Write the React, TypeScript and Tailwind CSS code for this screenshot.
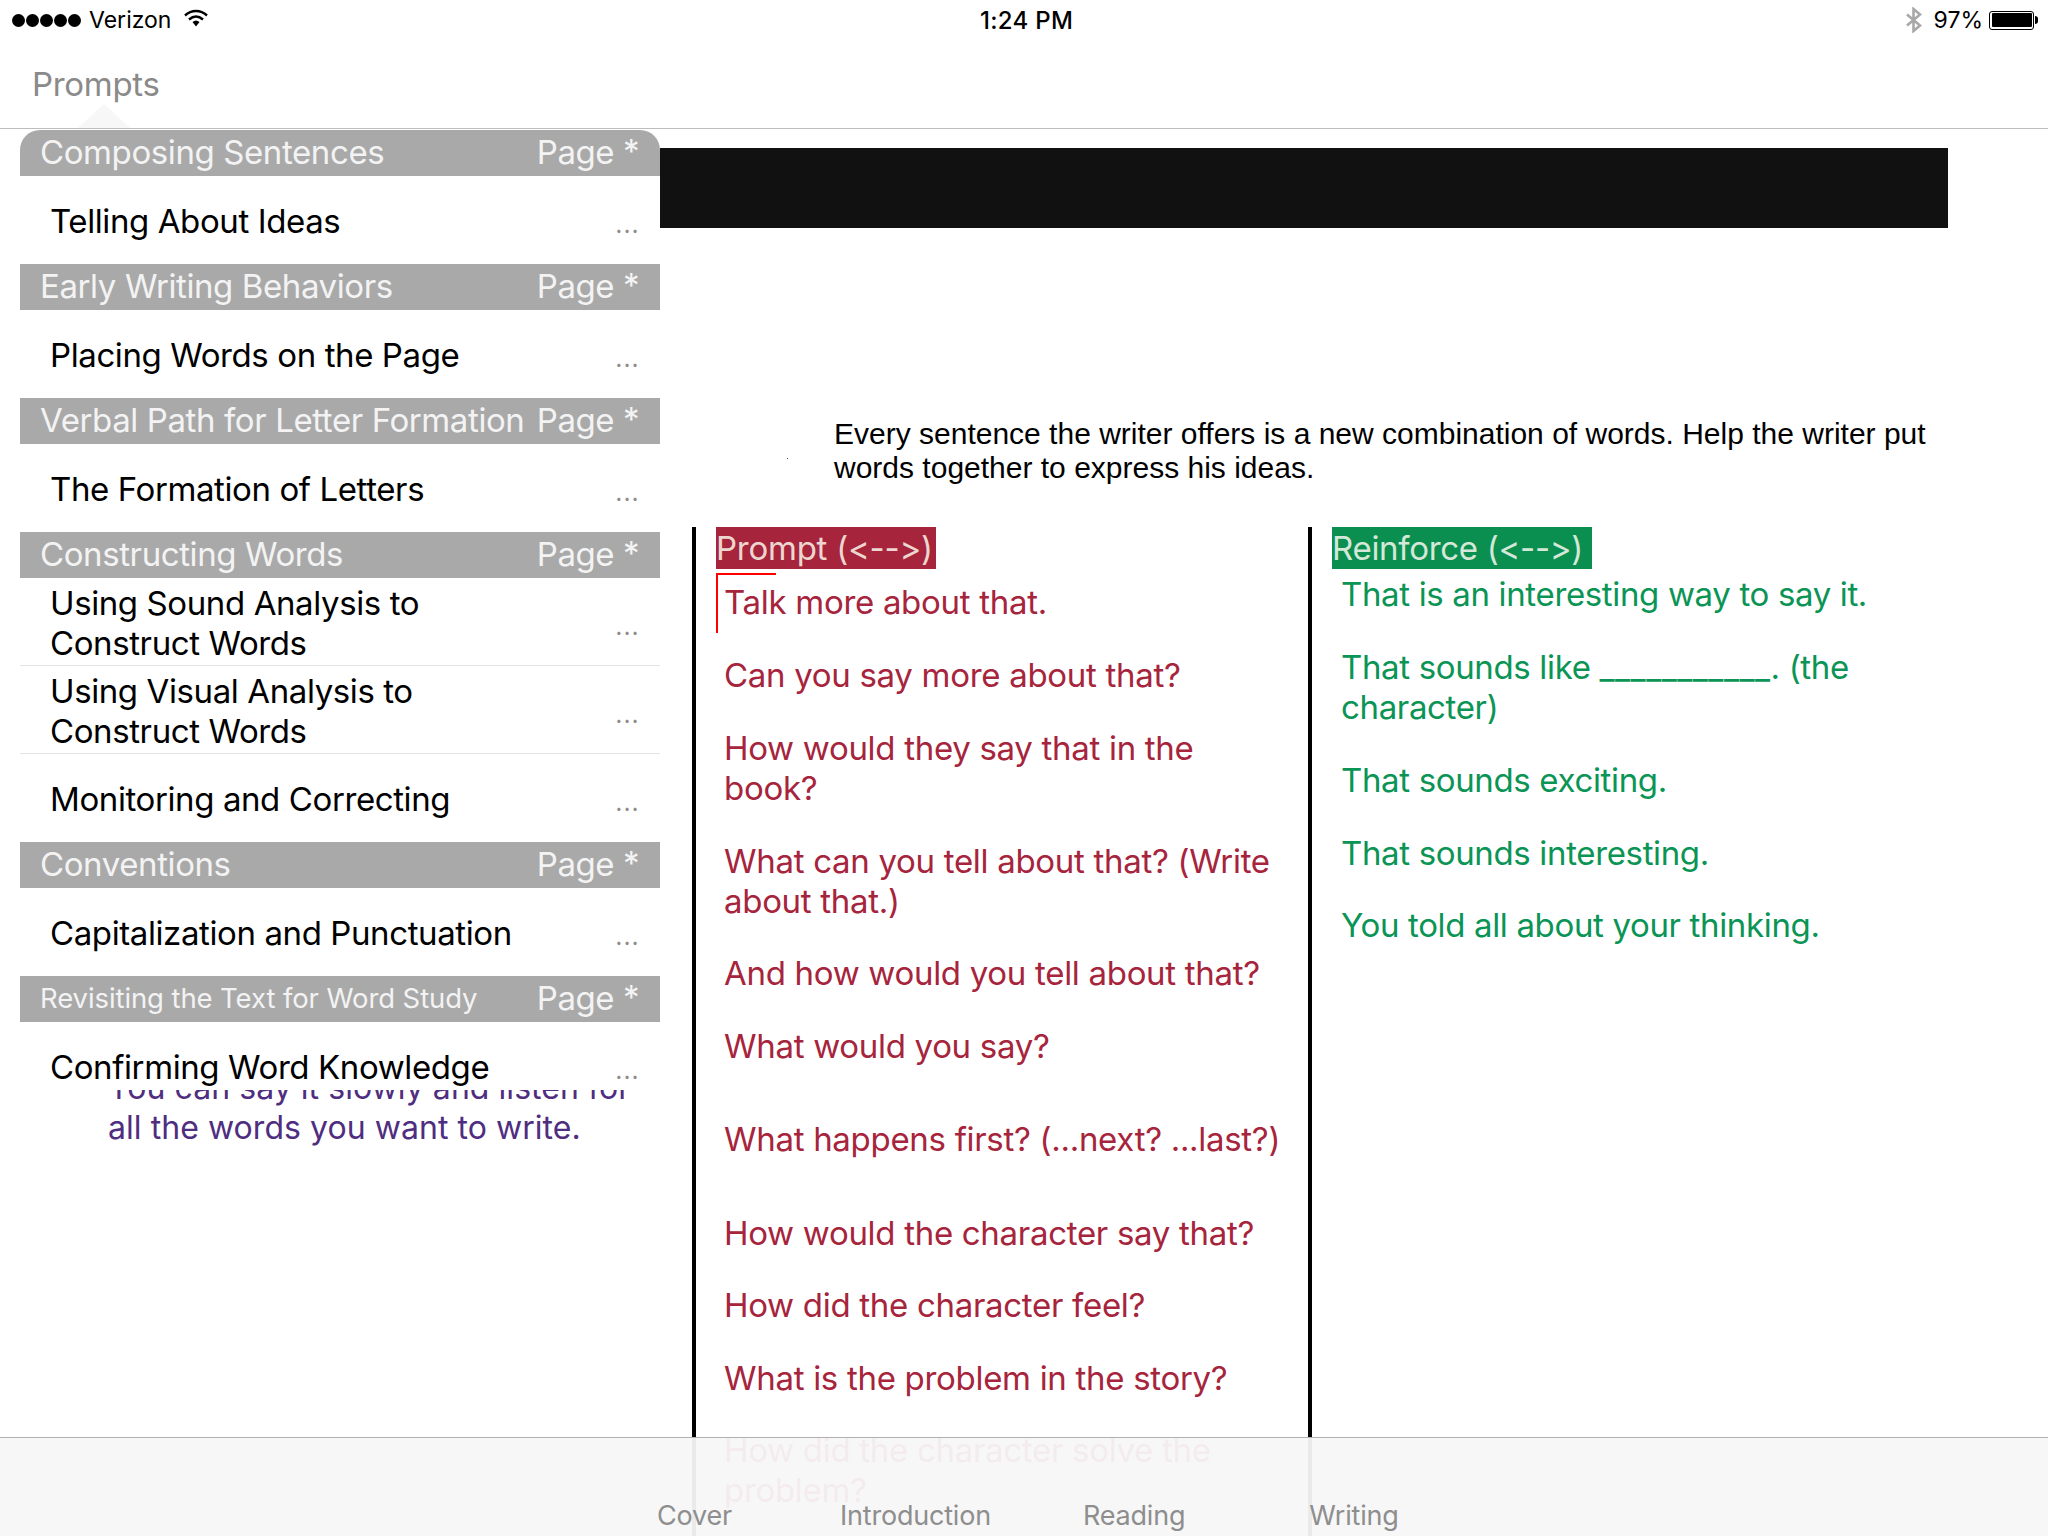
const sections = [
  {
    title: "Composing Sentences",
    rows: [{ lines: ["Telling About Ideas"] }],
  },
  {
    title: "Early Writing Behaviors",
    rows: [{ lines: ["Placing Words on the Page"] }],
  },
  {
    title: "Verbal Path for Letter Formation",
    rows: [{ lines: ["The Formation of Letters"] }],
  },
  {
    title: "Constructing Words",
    rows: [
      { lines: ["Using Sound Analysis to", "Construct Words"] },
      { lines: ["Using Visual Analysis to", "Construct Words"] },
      { lines: ["Monitoring and Correcting"] },
    ],
  },
  {
    title: "Conventions",
    rows: [{ lines: ["Capitalization and Punctuation"] }],
  },
  {
    title: "Revisiting the Text for Word Study",
    small: true,
    rows: [{ lines: ["Confirming Word Knowledge"] }],
  },
];

function SignalDots() {
  return (
    <div className="flex gap-[1px]">
      {[0, 1, 2, 3, 4].map((i) => (
        <span key={i} className="w-[13px] h-[13px] rounded-full bg-black" />
      ))}
    </div>
  );
}

function StatusBar() {
  return (
    <div className="h-[40px] flex items-center justify-between text-[23px] text-black relative">
      <div className="flex items-center pl-[12px]">
        <SignalDots />
        <span className="ml-[8px]">Verizon</span>
        <svg width="24" height="18" viewBox="0 0 24 18" className="ml-[13px] mb-[4px]">
          <path d="M1 6.5C7.5 .5 16.5 .5 23 6.5" fill="none" stroke="#000" strokeWidth="2.4" />
          <path d="M5 10.5C9.5 6.5 14.5 6.5 19 10.5" fill="none" stroke="#000" strokeWidth="2.4" />
          <path d="M8.5 13C11 11 13 11 15.5 13L12 17.5Z" fill="#000" />
        </svg>
      </div>
      <span className="absolute left-[980px] top-[3px] font-medium text-[24px] tracking-[0.3px]">1:24 PM</span>
      <div className="flex items-center pr-[10px]">
        <svg width="16" height="26" viewBox="0 0 16 26" fill="none" stroke="#a8a8a8" strokeWidth="2.6">
          <path d="M1 7.5L14 18.5L7.5 24V2L14 7.5L1 18.5" />
        </svg>
        <span className="ml-[12px]">97%</span>
        <div className="ml-[6px] w-[45px] h-[19px] rounded-[3px] border border-black p-[1.5px]">
          <div className="w-full h-full bg-black rounded-[1px]" />
        </div>
        <div className="ml-[1px] w-[3px] h-[8px] bg-black rounded-r-full" />
      </div>
    </div>
  );
}

function Sidebar() {
  return (
    <div className="w-[640px] ml-[20px] mt-[1px] shrink-0">
      <div className="h-[960px] overflow-hidden bg-white rounded-t-[20px]">
        {sections.map((s) => (
          <div key={s.title}>
            <div className="h-[46px] bg-[#a9a9a9] text-[#f3f3f3] flex items-center justify-between pl-[20px] pr-[21px]">
              <span className={s.small ? "text-[27.5px] tracking-[-0.1px]" : "text-[33px] tracking-[-0.4px]"}>{s.title}</span>
              <span className="text-[33px] tracking-[-0.5px] flex items-start">
                Page<span className="ml-[9px] -mt-[1px]">*</span>
              </span>
            </div>
            {s.rows.map((r, i) => (
              <div
                key={i}
                className={`h-[88px] flex items-center justify-between pl-[30px] pr-[20px] pt-[2px] ${
                  r.lines.length > 1 ? "border-b border-[#e4e4e4]" : ""
                }`}
              >
                <div className="text-[33px] leading-[40px] tracking-[-0.4px] text-black">
                  {r.lines.map((l) => (
                    <div key={l}>{l}</div>
                  ))}
                </div>
                <span className="text-[22px] text-[#8c8c8c] tracking-[1.5px] mt-[9px] font-medium">...</span>
              </div>
            ))}
          </div>
        ))}
      </div>
      <div className="h-[58px] overflow-hidden flex flex-col justify-end pl-[88px] text-[32px] leading-[40px] tracking-[0.05px] text-[#4f2d7f]">
        <div className="whitespace-nowrap">You can say it slowly and listen for</div>
        <div className="whitespace-nowrap">all the words you want to write.</div>
      </div>
    </div>
  );
}

function Prompt({ className, children }: { className: string; children: React.ReactNode }) {
  return <div className={className}>{children}</div>;
}

function PromptColumn() {
  return (
    <div className="w-[616px] shrink-0 border-l-4 border-black pl-[20px]">
      <div className="w-[220px] h-[42px] bg-[#a6243c] text-[#ecd6cf] text-[33px] leading-[42px] tracking-[-0.25px] whitespace-nowrap">
        Prompt (&lt;--&gt;)
      </div>
      <div className="relative text-[#a6243c] text-[33px] leading-[40px] tracking-[-0.3px] pl-[8px] whitespace-nowrap">
        <div className="absolute left-0 top-[4px] w-[60px] h-[60px] border-l-2 border-t-2 border-[#f00]" />
        <Prompt className="pt-[13px]">Talk more about that.</Prompt>
        <Prompt className="mt-[33px]">Can you say more about that?</Prompt>
        <Prompt className="mt-[33px]">
          How would they say that in the
          <br />
          book?
        </Prompt>
        <Prompt className="mt-[33px]">
          What can you tell about that? (Write
          <br />
          about that.)
        </Prompt>
        <Prompt className="mt-[32px]">And how would you tell about that?</Prompt>
        <Prompt className="mt-[33px]">What would you say?</Prompt>
        <Prompt className="mt-[53px]">What happens first? (...next? ...last?)</Prompt>
        <Prompt className="mt-[54px]">How would the character say that?</Prompt>
        <Prompt className="mt-[32px]">How did the character feel?</Prompt>
        <Prompt className="mt-[33px]">What is the problem in the story?</Prompt>
        <Prompt className="mt-[32px]">
          How did the character solve the
          <br />
          problem?
        </Prompt>
      </div>
    </div>
  );
}

function ReinforceColumn() {
  return (
    <div className="flex-1 border-l-4 border-black pl-[20px]">
      <div className="w-[260px] h-[42px] bg-[#0a8f50] text-[#d5e8d8] text-[33px] leading-[42px] tracking-[-0.3px] whitespace-nowrap">
        Reinforce (&lt;--&gt;)
      </div>
      <div className="text-[#0a9455] text-[33px] leading-[40px] tracking-[-0.35px] pl-[9px] whitespace-nowrap">
        <Prompt className="mt-[5px]">That is an interesting way to say it.</Prompt>
        <Prompt className="mt-[33px]">
          That sounds like <span className="tracking-[0.5px]">___________</span>. (the
          <br />
          character)
        </Prompt>
        <Prompt className="mt-[33px]">That sounds exciting.</Prompt>
        <Prompt className="mt-[33px]">That sounds interesting.</Prompt>
        <Prompt className="mt-[32px]">You told all about your thinking.</Prompt>
      </div>
    </div>
  );
}

function Content() {
  return (
    <div className="flex-1 min-w-0">
      <div className="mt-[19px] h-[80px] w-[1288px] bg-[#111111]" />
      <div className="relative mt-[188px] pl-[174px] pr-[60px] pt-[1px] h-[111px] text-[30px] leading-[34px] text-black font-['Liberation_Sans',sans-serif] whitespace-nowrap">
        Every sentence the writer offers is a new combination of words. Help the writer put
        <br />
        words together to express his ideas.
        <span className="absolute left-[127px] top-[42px] w-[1px] h-[1px] bg-[#555]" />
      </div>
      <div className="flex ml-[32px] h-[1009px]">
        <PromptColumn />
        <ReinforceColumn />
      </div>
    </div>
  );
}

function TabBar() {
  return (
    <div className="absolute left-0 right-0 bottom-0 h-[99px] bg-[#f7f7f7]/95 border-t border-[#b0b0b0] flex items-end pl-[657px] text-[27px] text-[#8e8e8e] tracking-[-0.2px]">
      <span>Cover</span>
      <span className="ml-[108px]">Introduction</span>
      <span className="ml-[92px]">Reading</span>
      <span className="ml-[124px]">Writing</span>
    </div>
  );
}

export default function App() {
  return (
    <div className="relative h-[1536px] w-[2048px] overflow-hidden bg-white font-['Inter',sans-serif]">
      <StatusBar />
      <div className="relative h-[89px] border-b border-[#bdbdbd] pl-[32px] pt-[22px] text-[33px] leading-[44px] tracking-[-0.3px] text-[#8a8a8a]">
        Prompts
        <div className="absolute left-[78px] bottom-0 w-0 h-0 border-l-[26px] border-r-[26px] border-b-[24px] border-l-transparent border-r-transparent border-b-[#f7f7f7]" />
      </div>
      <div className="flex">
        <Sidebar />
        <Content />
      </div>
      <TabBar />
    </div>
  );
}
